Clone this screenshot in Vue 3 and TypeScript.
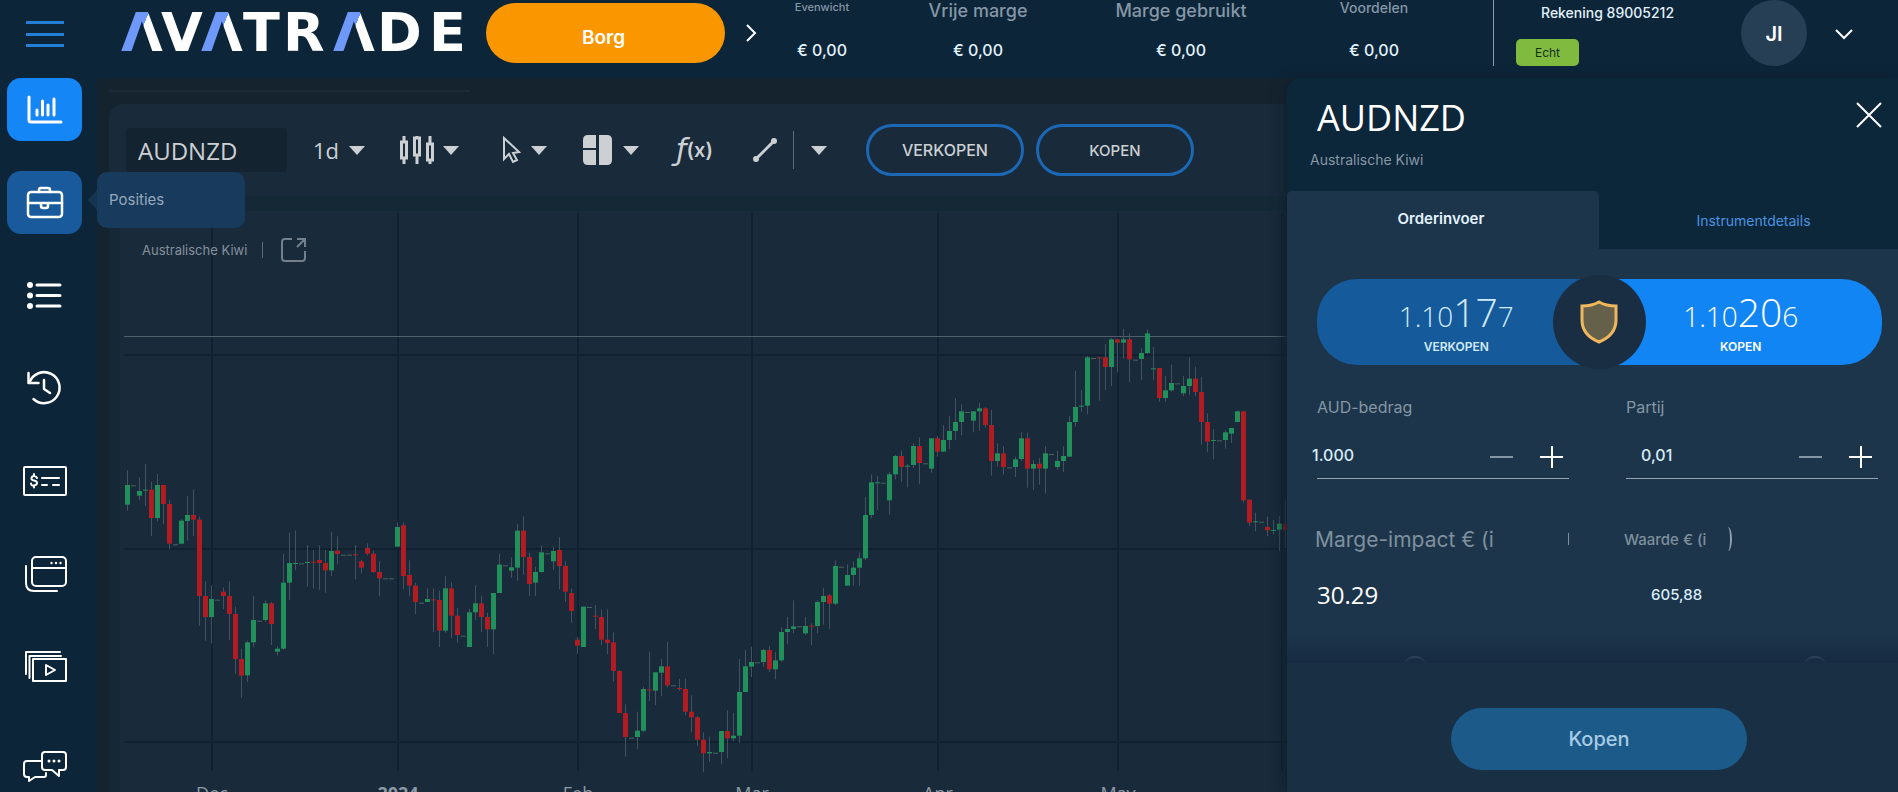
<script setup lang="ts">
import { ref } from 'vue'

interface Candle {
  x: number
  kind: string
  top: number
  height: number
  high: number
  range: number
}

interface Stat {
  label: string
  value: string
  size: string
}

const STEP = 6
const TICKS_PER_PIXEL = 3

// Each entry: direction (u = up, d = down), body top, body bottom, high, low. "f" marks a session without trades.
const winter = `u 135 194 90 212;f 136;u 153 167 112 180;u 149 152 72 198;d 149 234 125 288;u 135 234 102 244;d 135 192 135 252;d 192 311 180 328;
f 313;u 242 311 238 311;u 225 243 168 302;d 225 239 148 288;d 239 468 230 557;d 468 531 424 602;u 477 531 436 610;f 479;
d 455 468 443 508;d 468 522 424 600;d 522 657 500 702;d 657 707 626 773;u 607 706 602 726;u 540 607 468 622;f 542;u 490 540 481 545;
d 490 552 486 615;u 626 635 618 647;u 428 626 341 630;u 369 428 278 480;u 369 372 272 391;f 370;u 366 369 315 440;d 365 368 330 446;
d 360 369 316 450;d 369 391 330 458;u 333 391 275 408;d 332 342 289 373;f 344;f 344;d 343 346 315 418;d 364 383 360 401;
d 324 341 310 346;d 341 396 332 399;d 396 415 364 468;f 415;f 415;u 261 320 247 320;d 256 408 247 448;d 405 437 361 468;
d 437 486 428 522;f 488;u 477 486 445 486;d 478 481 446 576;d 480 572 452 621;u 445 572 409 578;d 445 527 427 594;d 527 585 504 608;
f 587;u 517 621 506 621;u 490 517 436 540;d 490 531 468 576;d 531 568 518 620;u 459 568 459 643;u 374 459 341 459;f 376;
u 382 392 352 413;u 272 383 252 422;d 272 351 229 404;d 351 432 338 468;u 396 428 380 468;u 337 396 316 398;f 340;u 333 364 320 390;
d 330 378 292 448;d 378 455 364 486;d 459 513 446 548;d 599 617 591 642;u 500 621 500 621;f 501;d 527 530 495 567;d 531 599 508 615;
d 599 609 508 642;d 607 693 577 724;d 693 819 690 819;d 819 891 793 950;f 893;u 872 891 815 927;u 747 872 740 877;d 748 751 635 783;
u 697 752 697 796;u 679 698 657 769;d 679 736 605 742;f 736;d 744 747 716 752;d 747 815 716 826;d 815 832 766 877;d 832 899 828 918;
d 899 940 877 996;u 936 940 890 966;f 938;u 873 936 873 972;d 873 895 810 954;u 887 895 819 903;u 756 887 657 909;u 679 756 630 756;
u 666 680 620 711;f 667;u 630 666 626 680;d 630 688 618 696;u 661 688 636 718;u 576 661 562 666;u 567 576 531 612;u 559 567 481 580;
f 559;u 558 580 531 585;d 557 560 550 616;u 486 558 481 580;u 468 486 444 554;d 466 491 462 567;u 378 491 361 495;f 380;
u 405 437 373 437;u 383 405 364 437;u 355 383 338 437;u 225 355 171 360`

const spring = `u 517 615 493 625;u 517 520 498 600;f 518;u 493 571 486 614;u 438 493 434 508;d 438 471 421 515;u 467 470 463 532;u 408 465 400 474;
d 408 459 382 522;f 460;u 385 476 385 488;d 385 425 378 440;u 390 425 346 425;u 363 390 319 417;u 336 363 264 390;u 304 336 283 376;
f 306;u 304 332 304 367;u 295 304 278 362;d 295 345 291 352;d 345 453 300 497;u 430 453 400 470;d 430 471 408 493;f 472;
u 448 471 440 501;u 385 447 367 452;d 385 476 368 533;u 462 476 450 540;d 461 475 444 524;u 430 476 408 551;f 432;u 453 471 422 479;
u 438 453 408 486;u 336 440 318 440;u 291 336 182 350;u 287 290 240 306;u 142 287 138 313;f 144;d 142 145 141 272;d 142 171 102 240;
u 88 171 84 228;d 88 98 86 187;u 88 98 57 146;d 88 148 70 217;f 149;u 129 147 115 210;u 70 129 58 132;u 175 178 111 210;
d 174 264 174 275;u 241 264 198 275;u 219 241 164 245;f 220;u 228 250 198 258;u 206 228 142 255;d 206 246 170 258;d 246 336 201 404;
d 336 395 310 426;u 390 393 357 448;f 391;u 367 390 361 416;u 354 371 354 399;u 304 336 302 336;d 304 571 304 578;d 569 638 569 648;
u 634 637 608 664;f 635;d 651 661 620 678;u 660 662 630 672;u 641 659 618 724;d 641 660 570 714`

function readCandles(source: string, first: number, offset: number): Candle[] {
  return source.split(';').map((entry, i) => {
    const [kind, ...rest] = entry.trim().split(' ')
    const [top, bottom = top, high = top, low = bottom] = rest.map((v) => offset + Number(v) / TICKS_PER_PIXEL)
    return {
      x: (first + i) * STEP,
      kind,
      top,
      height: Math.max(1, bottom - top),
      high,
      range: low - high,
    }
  })
}

const winterCandles = readCandles(winter, 0, 229)
const candles: Candle[] = [...winterCandles, ...readCandles(spring, winterCandles.length, 99)]

const months = [
  { x: 92, label: 'Dec', year: false },
  { x: 278, label: '2024', year: true },
  { x: 458, label: 'Feb', year: false },
  { x: 632, label: 'Mar', year: false },
  { x: 818, label: 'Apr', year: false },
  { x: 998, label: 'May', year: false },
]
const priceLevels = [144, 338, 531]

const stats: Stat[] = [
  { label: 'Evenwicht', value: '€ 0,00', size: 'xs' },
  { label: 'Vrije marge', value: '€ 0,00', size: 'lg' },
  { label: 'Marge gebruikt', value: '€ 0,00', size: 'lg' },
  { label: 'Voordelen', value: '€ 0,00', size: 'sm' },
]

const symbol = ref('AUDNZD')
const amount = ref('1.000')
const lot = ref('0,01')
</script>

<template>
  <div class="app">
    <aside class="sidebar">
      <button class="menu" type="button" aria-label="Menu"><i></i><i></i><i></i></button>
      <nav class="nav">
        <a class="nav-item active" href="#grafiek" aria-label="Grafiek">
          <svg width="48" height="48" viewBox="0 0 48 48">
            <path d="M8 11v23q0 2 2 2h30" />
            <path d="M16 24v5M21.500 15v14M27 19v10M33 13v16" />
          </svg>
        </a>
        <a class="nav-item hover" href="#posities" aria-label="Posities">
          <svg class="medium" width="48" height="48" viewBox="0 0 48 48">
            <rect x="7" y="13" width="34" height="25" rx="3" />
            <path d="M18 13v-2q0-2 2-2h7q2 0 2 2v2M7 24h34M20 24v3q0 2 2 2h3q2 0 2-2v-3" />
          </svg>
        </a>
        <a class="nav-item" href="#orders" aria-label="Orders">
          <svg width="48" height="48" viewBox="0 0 48 48">
            <path d="M16 13h23M16 23.500h23M16 34h23" />
            <g class="solid"><circle cx="9" cy="13" r="3" /><circle cx="9" cy="23.500" r="3" /><circle cx="9" cy="34" r="3" /></g>
          </svg>
        </a>
        <a class="nav-item" href="#geschiedenis" aria-label="Geschiedenis">
          <svg class="medium" width="48" height="48" viewBox="0 0 48 48">
            <path d="M7.500 8v10h10" />
            <path d="M8.500 17.500A15.500 15.500 0 1 1 12.500 34" />
            <path d="M23 15v9l6 4" />
          </svg>
        </a>
        <a class="nav-item" href="#rekening" aria-label="Rekening">
          <svg class="fine" width="48" height="48" viewBox="0 0 48 48">
            <rect x="3" y="9" width="42" height="28" rx="1" />
            <path d="M21 20h17M21 27h5M32 27h6" />
            <path d="M16 20q-1-2-3-2t-2.500 2 2.500 2.500 3 2.500-3 2.500-3-2M13 16v2M13 27.500v2" />
          </svg>
        </a>
        <a class="nav-item" href="#vensters" aria-label="Vensters">
          <svg class="fine" width="48" height="48" viewBox="0 0 48 48">
            <rect x="11" y="6" width="34" height="29" rx="4" />
            <path d="M11 17h34M5 15v17q0 8 8 8h23" />
            <g class="solid"><circle cx="30.500" cy="12" r="1.200" /><circle cx="35" cy="12" r="1.200" /><circle cx="39.500" cy="12" r="1.200" /></g>
          </svg>
        </a>
        <a class="nav-item" href="#video" aria-label="Video">
          <svg class="fine" width="48" height="48" viewBox="0 0 48 48">
            <rect x="12" y="15" width="33" height="22" />
            <path d="M8.500 34V12H40M5 30V8h34M25 21v10l9-5z" />
          </svg>
        </a>
        <a class="nav-item chat" href="#chat" aria-label="Chat">
          <svg class="fine" width="48" height="48" viewBox="0 0 48 48">
            <path d="M21 14H6q-3 0-3 3v10q0 3 3 3h2v4l6-4h9q2 0 2-2v-2" />
            <path d="M24 5h18q3 0 3 3v12q0 3-3 3h-4v6l-7-6h-7q-3 0-3-3V8q0-3 3-3z" />
            <g class="solid"><circle cx="28" cy="14" r="1.500" /><circle cx="33" cy="14" r="1.500" /><circle cx="38" cy="14" r="1.500" /></g>
          </svg>
        </a>
      </nav>
      <div class="tooltip">Posities</div>
    </aside>

    <div class="main">
      <header class="topbar">
        <svg class="logo" width="346" height="38" viewBox="0 0 346 38" role="img" aria-label="AVATRADE">
          <defs>
            <linearGradient v-for="x in [1, 81, 213]" :id="'slash' + x" :key="x" gradientUnits="userSpaceOnUse" :x1="x - 17" y1="4" :x2="x + 57" y2="34">
              <stop offset="50%" stop-color="#6f98fb" />
              <stop offset="50%" stop-color="#ffffff" />
            </linearGradient>
          </defs>
          <text class="wordmark" y="38" x="1 41 81 123 163 213 257 309"><tspan fill="url(#slash1)">Λ</tspan>V<tspan fill="url(#slash81)">Λ</tspan>TR<tspan fill="url(#slash213)">Λ</tspan>DE</text>
        </svg>
        <button class="deposit" type="button">Borg</button>
        <button class="plain next" type="button" aria-label="Volgende">
          <svg width="12" height="20" viewBox="0 0 12 20"><path d="M2 2l8 8-8 8" /></svg>
        </button>
        <dl class="stats">
          <div v-for="stat in stats" :key="stat.label" class="stat">
            <dt :class="stat.size">{{ stat.label }}</dt>
            <dd>{{ stat.value }}</dd>
          </div>
        </dl>
        <div class="account">
          <div class="account-info">
            <span class="account-name">Rekening 89005212</span>
            <span class="badge">Echt</span>
          </div>
          <span class="avatar">JI</span>
          <button class="plain" type="button" aria-label="Accountmenu">
            <svg width="18" height="12" viewBox="0 0 18 12"><path d="M1 2l8 8 8-8" /></svg>
          </button>
        </div>
      </header>

      <div class="workspace">
        <section class="chart-panel">
          <div class="toolbar">
            <input v-model="symbol" class="symbol" type="text" aria-label="Instrument" />
            <button class="tool period" type="button">1d <i class="caret"></i></button>
            <button class="tool type" type="button" aria-label="Grafiektype">
              <svg width="36" height="28" viewBox="0 0 36 28">
                <path class="line" d="M5 0v6M5 22v6M18 0v2M18 20v8M31 0v8M31 25v3" />
                <path class="line" d="M2.500 6h5v16h-5zM15.500 2h5v17h-5zM28.500 8h5v16h-5z" />
              </svg>
              <i class="caret"></i>
            </button>
            <button class="tool cursor" type="button" aria-label="Cursor">
              <svg width="20" height="28" viewBox="0 0 20 28">
                <path class="line thin" d="M3 2v21l5-5 4 8 4-2-4-7 6-1z" />
              </svg>
              <i class="caret"></i>
            </button>
            <button class="tool layout" type="button" aria-label="Indeling">
              <svg width="30" height="30" viewBox="0 0 30 30">
                <path class="fill" d="M5 0h8v13H0V5q0-5 5-5zM0 15h13v15H5q-5 0-5-5zM16 0h8q5 0 5 5v20q0 5-5 5h-8z" />
              </svg>
              <i class="caret"></i>
            </button>
            <button class="tool indicator" type="button" aria-label="Indicatoren"><em>ƒ</em><b>(x)</b></button>
            <button class="tool draw" type="button" aria-label="Lijn tekenen">
              <svg width="26" height="26" viewBox="0 0 26 26">
                <path class="line" d="M4 22L22 4" />
                <circle class="fill" cx="4" cy="22" r="3" /><circle class="fill" cx="22" cy="4" r="3" />
              </svg>
            </button>
            <button class="tool more" type="button" aria-label="Meer tekengereedschap"><i class="caret"></i></button>
            <button class="trade sell" type="button">VERKOPEN</button>
            <button class="trade buy" type="button">KOPEN</button>
          </div>

          <div class="plot">
            <svg class="chart" width="100%" height="100%" role="img" aria-label="Koersgrafiek AUDNZD">
              <line v-for="month in months" :key="month.label" class="grid" :x1="month.x" :x2="month.x" y1="2" y2="560" />
              <line class="grid" x1="1162" x2="1162" y1="2" y2="560" />
              <line v-for="level in priceLevels" :key="level" class="grid" x1="4" x2="100%" :y1="level" :y2="level" />
              <rect class="price" x="4" y="125" width="100%" height="1" />
              <g v-for="candle in candles" :key="candle.x">
                <rect v-if="candle.range" class="wick" :x="candle.x + 7" :y="candle.high" width="1" :height="candle.range" />
                <rect :class="candle.kind" :x="candle.x + 5" :y="candle.top" width="5" :height="candle.height" />
              </g>
              <text v-for="month in months" :key="month.label" :class="['month', { year: month.year }]" :x="month.x" y="589">{{ month.label }}</text>
            </svg>
            <div class="legend">
              <span>Australische Kiwi</span>
              <button class="plain" type="button" aria-label="Openen in nieuw venster">
                <svg width="27" height="26" viewBox="0 0 27 26"><path d="M12 2H5Q2 2 2 5v16q0 3 3 3h17q3 0 3-3v-7M17 2h8v8M25 2l-8 8" /></svg>
              </button>
            </div>
          </div>
        </section>

        <section class="order">
          <header class="order-head">
            <div>
              <h1>AUDNZD</h1>
              <p>Australische Kiwi</p>
            </div>
            <button class="plain" type="button" aria-label="Sluiten">
              <svg width="26" height="26" viewBox="0 0 26 26"><path d="M1 1l24 24M25 1L1 25" /></svg>
            </button>
          </header>
          <div class="tabs" role="tablist">
            <button class="tab selected" type="button" role="tab" aria-selected="true">Orderinvoer</button>
            <button class="tab" type="button" role="tab" aria-selected="false">Instrumentdetails</button>
          </div>
          <form class="ticket" @submit.prevent>
            <div class="quotes">
              <button class="quote bid" type="button">
                <span class="rate">1.10<strong>17</strong>7</span>
                <span class="side">VERKOPEN</span>
              </button>
              <button class="quote ask" type="button">
                <span class="rate">1.10<strong>20</strong>6</span>
                <span class="side">KOPEN</span>
              </button>
              <span class="protect">
                <svg width="40" height="44" viewBox="0 0 40 44">
                  <path d="M20 2q7 4 17 4v14q0 15-17 22Q3 35 3 20V6q10 0 17-4z" />
                </svg>
              </span>
            </div>
            <div class="fields">
              <div class="field">
                <label for="amount">AUD-bedrag</label>
                <div class="stepper">
                  <input id="amount" v-model="amount" type="text" />
                  <button class="step minus" type="button" aria-label="Bedrag verlagen"></button>
                  <button class="step plus" type="button" aria-label="Bedrag verhogen"></button>
                </div>
              </div>
              <div class="field lot">
                <label for="lot">Partij</label>
                <div class="stepper">
                  <input id="lot" v-model="lot" type="text" />
                  <button class="step minus" type="button" aria-label="Partij verlagen"></button>
                  <button class="step plus" type="button" aria-label="Partij verhogen"></button>
                </div>
              </div>
            </div>
            <dl class="fields figures">
              <div class="figure margin">
                <dt>Marge-impact € (i <i class="info"></i></dt>
                <dd>30.29</dd>
              </div>
              <div class="figure worth">
                <dt>Waarde € (i <i class="info"></i></dt>
                <dd>605,88</dd>
              </div>
            </dl>
            <div class="options">
              <i class="hint"></i><i class="hint"></i>
            </div>
          </form>
          <footer class="order-foot">
            <button class="submit" type="button">Kopen</button>
          </footer>
        </section>
      </div>
    </div>
  </div>
</template>

<style>
body {
  margin: 0;
  background: #0c2539;
}
</style>

<style scoped>
* {
  box-sizing: border-box;
}
.app {
  display: grid;
  grid-template-columns: 97px minmax(0, 1fr);
  height: 100vh;
  overflow: hidden;
  background: #0c2539;
  color: #fff;
  font-family: Inter, "Liberation Sans", sans-serif;
}
button,
input {
  margin: 0;
  padding: 0;
  border: 0;
  background: none;
  color: inherit;
  font: inherit;
}
button {
  cursor: pointer;
}
h1,
p,
dl,
dd {
  margin: 0;
}
.plain {
  display: flex;
}
.plain svg {
  fill: none;
  stroke: currentColor;
  stroke-width: 2;
}

/* Sidebar */
.sidebar {
  position: relative;
  z-index: 2;
  min-height: 0;
}
.menu {
  display: flex;
  flex-direction: column;
  justify-content: space-between;
  width: 38px;
  height: 26px;
  margin: 21px 0 31px 26px;
}
.menu i {
  height: 3px;
  background: #237fd8;
}
.nav {
  display: flex;
  flex-direction: column;
  gap: 30px;
  padding-left: 7px;
}
.nav-item {
  display: flex;
  flex: none;
  align-items: center;
  justify-content: center;
  width: 75px;
  height: 63px;
  border-radius: 14px;
}
.nav-item.active {
  background: #1586f6;
}
.nav-item.hover {
  background: #185a9c;
}
.nav-item.chat {
  margin-top: 10px;
}
.nav-item svg {
  fill: none;
  stroke: #fff;
  stroke-width: 3;
  stroke-linecap: round;
  stroke-linejoin: round;
}
.nav-item .medium {
  stroke-width: 2.5;
}
.nav-item .fine {
  stroke-width: 2;
}
.nav-item .solid {
  fill: #fff;
  stroke: none;
}
.tooltip {
  position: absolute;
  top: 172px;
  left: 97px;
  width: 148px;
  padding: 18px 12px;
  border-radius: 10px;
  background: #173a5d;
  color: #96a9bb;
  font-size: 15px;
  line-height: 20px;
}
.tooltip::before {
  content: "";
  position: absolute;
  top: 18px;
  left: -9px;
  border: solid transparent;
  border-width: 10px 9px 10px 0;
  border-right-color: #153552;
}

/* Top bar */
.main {
  display: flex;
  flex-direction: column;
  min-height: 0;
}
.topbar {
  display: flex;
  align-items: flex-start;
  height: 78px;
}
.logo {
  flex: none;
  margin: 13px 20px 0 23px;
  overflow: visible;
}
.wordmark {
  fill: #fff;
  font: bold 54px "DejaVu Sans", sans-serif;
}
.deposit {
  flex: none;
  width: 239px;
  height: 60px;
  margin-top: 3px;
  padding: 8px 4px 0 0;
  border-radius: 30px;
  background: #f99600;
  font-size: 19px;
  font-weight: 600;
}
.next {
  margin: 23px 0 0 20px;
}
.stats {
  display: grid;
  flex: 1;
  grid-template-columns: 130fr 182fr 224fr 200fr;
}
.stat {
  display: flex;
  flex-direction: column;
  align-items: center;
}
.stat:last-child {
  padding-right: 38px;
}
.stat dt {
  height: 40px;
  color: #8597a6;
  font-size: 18px;
  font-weight: 500;
  line-height: 22px;
}
.stat .sm {
  font-size: 14px;
  line-height: 16px;
}
.stat .xs {
  font-size: 11px;
  line-height: 14px;
}
.stat dd {
  color: #e3f2fd;
  font-size: 16px;
  font-weight: 500;
  line-height: 20px;
}
.account {
  display: flex;
  align-items: flex-start;
  width: 405px;
  height: 66px;
  padding: 0 45px 0 22px;
  border-left: 1px solid #8b9aa7;
}
.account-info {
  display: flex;
  flex: 1;
  flex-direction: column;
  align-items: flex-start;
}
.account-name {
  height: 39px;
  padding: 3px 0 0 25px;
  color: #e3f2fd;
  font-size: 14px;
  font-weight: 500;
  line-height: 20px;
}
.badge {
  width: 63px;
  border-radius: 5px;
  background: #80bb40;
  color: #12301b;
  font-size: 12px;
  line-height: 27px;
  text-align: center;
}
.avatar {
  width: 66px;
  height: 66px;
  margin-right: 28px;
  border-radius: 50%;
  background: #263f54;
  font-size: 20px;
  font-weight: 600;
  line-height: 68px;
  text-align: center;
}
.account .plain {
  padding-top: 28px;
}

/* Workspace */
.workspace {
  display: flex;
  flex: 1;
  min-height: 0;
  background: #15232e;
}
.chart-panel {
  position: relative;
  display: flex;
  flex: 1;
  flex-direction: column;
  min-width: 0;
  margin: 26px 0 0 12px;
  border-top-left-radius: 14px;
  background: #152836;
}
.chart-panel::before {
  content: "";
  position: absolute;
  top: -14px;
  width: 361px;
  height: 2px;
  background: #1b2b39;
}
.toolbar {
  display: flex;
  align-items: center;
  height: 92px;
  padding: 0 0 0 17px;
  border-top-left-radius: 14px;
  background: #192a3a;
  color: #ccd0d3;
}
.symbol {
  flex: none;
  width: 161px;
  height: 44px;
  padding-left: 12px;
  border-radius: 4px;
  background: #142330;
  font: 24px "Open Sans", sans-serif;
}
.tool {
  display: flex;
  flex: none;
  align-items: center;
  gap: 10px;
}
.caret {
  border: solid transparent;
  border-width: 9px 8px 0;
  border-top-color: #ccd0d3;
}
.line {
  fill: none;
  stroke: #ccd0d3;
  stroke-width: 3;
}
.line.thin {
  stroke-width: 2;
}
.fill {
  fill: #ccd0d3;
}
.period {
  margin-left: 26px;
  font: 22px "Open Sans", sans-serif;
}
.type {
  margin-left: 34px;
  gap: 8px;
}
.cursor {
  margin-left: 42px;
}
.layout {
  margin-left: 36px;
}
.indicator {
  gap: 0;
  margin-left: 37px;
}
.indicator em {
  font: italic 30px/30px "DejaVu Sans", sans-serif;
}
.indicator b {
  font-size: 20px;
  font-weight: 600;
  line-height: 30px;
}
.draw {
  margin-left: 39px;
}
.more {
  height: 38px;
  margin-left: 15px;
  padding-left: 17px;
  border-left: 1px solid #5f6c76;
}
.trade {
  flex: none;
  width: 158px;
  height: 52px;
  border: 3px solid #1d68b4;
  border-radius: 26px;
  font-weight: 500;
}
.sell {
  margin: 0 12px 0 39px;
  font-size: 16px;
}
.buy {
  font-size: 15px;
}
.plot {
  position: relative;
  flex: 1;
  min-height: 0;
  margin: 15px 0 0 11px;
  background: #192a3a;
}
.chart {
  position: absolute;
  inset: 0;
  overflow: hidden;
}
.grid {
  stroke: #122130;
  stroke-width: 2;
}
.price {
  fill: #52606c;
}
.wick {
  fill: #43525f;
}
.u {
  fill: #22905a;
}
.d {
  fill: #b01c22;
}
.f {
  fill: #47655f;
}
.month {
  fill: #8d9aa5;
  font: 18px "Open Sans", sans-serif;
  text-anchor: middle;
}
.year {
  font-weight: 700;
}
.legend {
  position: relative;
  display: flex;
  align-items: center;
  padding: 26px 0 0 22px;
  color: #74818d;
  font-size: 13px;
}
.legend span {
  padding-right: 15px;
  border-right: 1px solid #5f6c76;
  color: #84919c;
}
.legend .plain {
  margin-left: 17px;
}

/* Order panel */
.order {
  position: relative;
  display: flex;
  flex: none;
  flex-direction: column;
  width: 611px;
  border-top-left-radius: 14px;
  background: #0c263a;
  box-shadow: -4px 0 12px #10202c;
}
.order-head {
  display: flex;
  align-items: flex-start;
  justify-content: space-between;
  height: 113px;
  padding: 16px 16px 0 23px;
}
.order-head h1 {
  padding-left: 7px;
  font: 36px/48px "Open Sans", sans-serif;
}
.order-head p {
  padding-top: 8px;
  color: #8797a5;
  font-size: 14px;
  line-height: 20px;
}
.order-head .plain {
  padding-top: 8px;
}
.tabs {
  display: grid;
  grid-template-columns: 312px 1fr;
  height: 58px;
}
.tab {
  padding: 0 0 0 10px;
  color: #4c93e0;
  font-size: 14px;
}
.tab.selected {
  padding: 0 4px 4px 0;
  border-radius: 5px 5px 0 0;
  background: #1c354a;
  color: #e3f2fd;
  font-size: 15px;
  font-weight: 600;
}
.ticket {
  position: relative;
  flex: 1;
  min-height: 0;
  padding: 30px 16px 0 30px;
  background: #1c354a;
  overflow: hidden;
}
.ticket::after {
  content: "";
  position: absolute;
  inset: auto 0 0;
  height: 30px;
  background: linear-gradient(#172b4200, #172b42);
}
.quotes {
  position: relative;
  display: grid;
  grid-template-columns: 1fr 1fr;
  height: 86px;
}
.quote {
  display: flex;
  flex-direction: column;
  align-items: center;
}
.bid {
  padding-right: 4px;
  border-radius: 40px 0 0 40px;
  background: #155a9b;
  color: #d3ebff;
}
.ask {
  border-radius: 0 40px 40px 0;
  background: #1285f5;
}
.rate {
  height: 58px;
  font: 300 28px/66px "Open Sans", sans-serif;
}
.rate strong {
  font-size: 39px;
  font-weight: 300;
}
.side {
  font-size: 12px;
  font-weight: 600;
  line-height: 20px;
}
.protect {
  position: absolute;
  top: -4px;
  left: calc(50% - 47px);
  display: flex;
  align-items: center;
  justify-content: center;
  width: 93px;
  height: 94px;
  border-radius: 50%;
  background: #192e42;
}
.protect path {
  fill: #64604a;
  stroke: #f0b75c;
  stroke-width: 3;
}
.fields {
  display: grid;
  grid-template-columns: 1fr 1fr;
  gap: 57px;
  padding: 32px 4px 0 0;
}
.field label {
  color: #8496a4;
  font-size: 16px;
  line-height: 20px;
}
.stepper {
  display: flex;
  align-items: center;
  height: 51px;
  margin-top: 11px;
  padding: 8px 6px 0 0;
  border-bottom: 1px solid #93a4b2;
}
.stepper input {
  flex: 1;
  width: 0;
  height: 30px;
  margin: 0 0 4px -5px;
  color: #d9ecfb;
  font-size: 16px;
  font-weight: 500;
}
.stepper .step {
  flex: none;
}
.lot .stepper input {
  margin-left: 15px;
}
.step {
  width: 23px;
  height: 23px;
  background: linear-gradient(#8496a4, #8496a4) center / 23px 2px no-repeat;
}
.plus {
  margin-left: 27px;
  background:
    linear-gradient(#fff, #fff) center / 23px 2px no-repeat,
    linear-gradient(#fff, #fff) center / 2px 22px no-repeat;
}
.figures {
  padding-top: 46px;
}
.figure dt {
  display: flex;
  align-items: center;
  height: 28px;
  margin-left: -2px;
  color: #7f909e;
}
.margin dt {
  justify-content: space-between;
  font-size: 21px;
}
.margin .info {
  width: 1px;
  height: 12px;
  background: #7f909e;
}
.worth dt {
  font-size: 15px;
  font-weight: 500;
}
.worth .info {
  width: 8px;
  height: 24px;
  margin-left: 18px;
  border-right: 2px solid #8fa0ad;
  border-radius: 50%;
}
.figure dd {
  height: 40px;
  margin-top: 22px;
  font: 24px/40px "Open Sans", sans-serif;
}
.worth dd {
  padding-left: 25px;
  color: #d9ecfb;
  font: 500 15px/40px Inter, sans-serif;
}
.options {
  display: flex;
  justify-content: space-between;
  padding: 41px 54px 0 85px;
}
.hint {
  width: 26px;
  height: 26px;
  border: 2px solid #8395a5;
  border-radius: 50%;
}
.order-foot {
  display: flex;
  flex: none;
  align-items: flex-start;
  justify-content: center;
  height: 129px;
  padding: 45px 0 0 13px;
  background: #192f43;
}
.submit {
  width: 296px;
  height: 62px;
  border-radius: 31px;
  background: #1c5a89;
  color: #a9cbe5;
  font-size: 20px;
  font-weight: 500;
}
</style>
